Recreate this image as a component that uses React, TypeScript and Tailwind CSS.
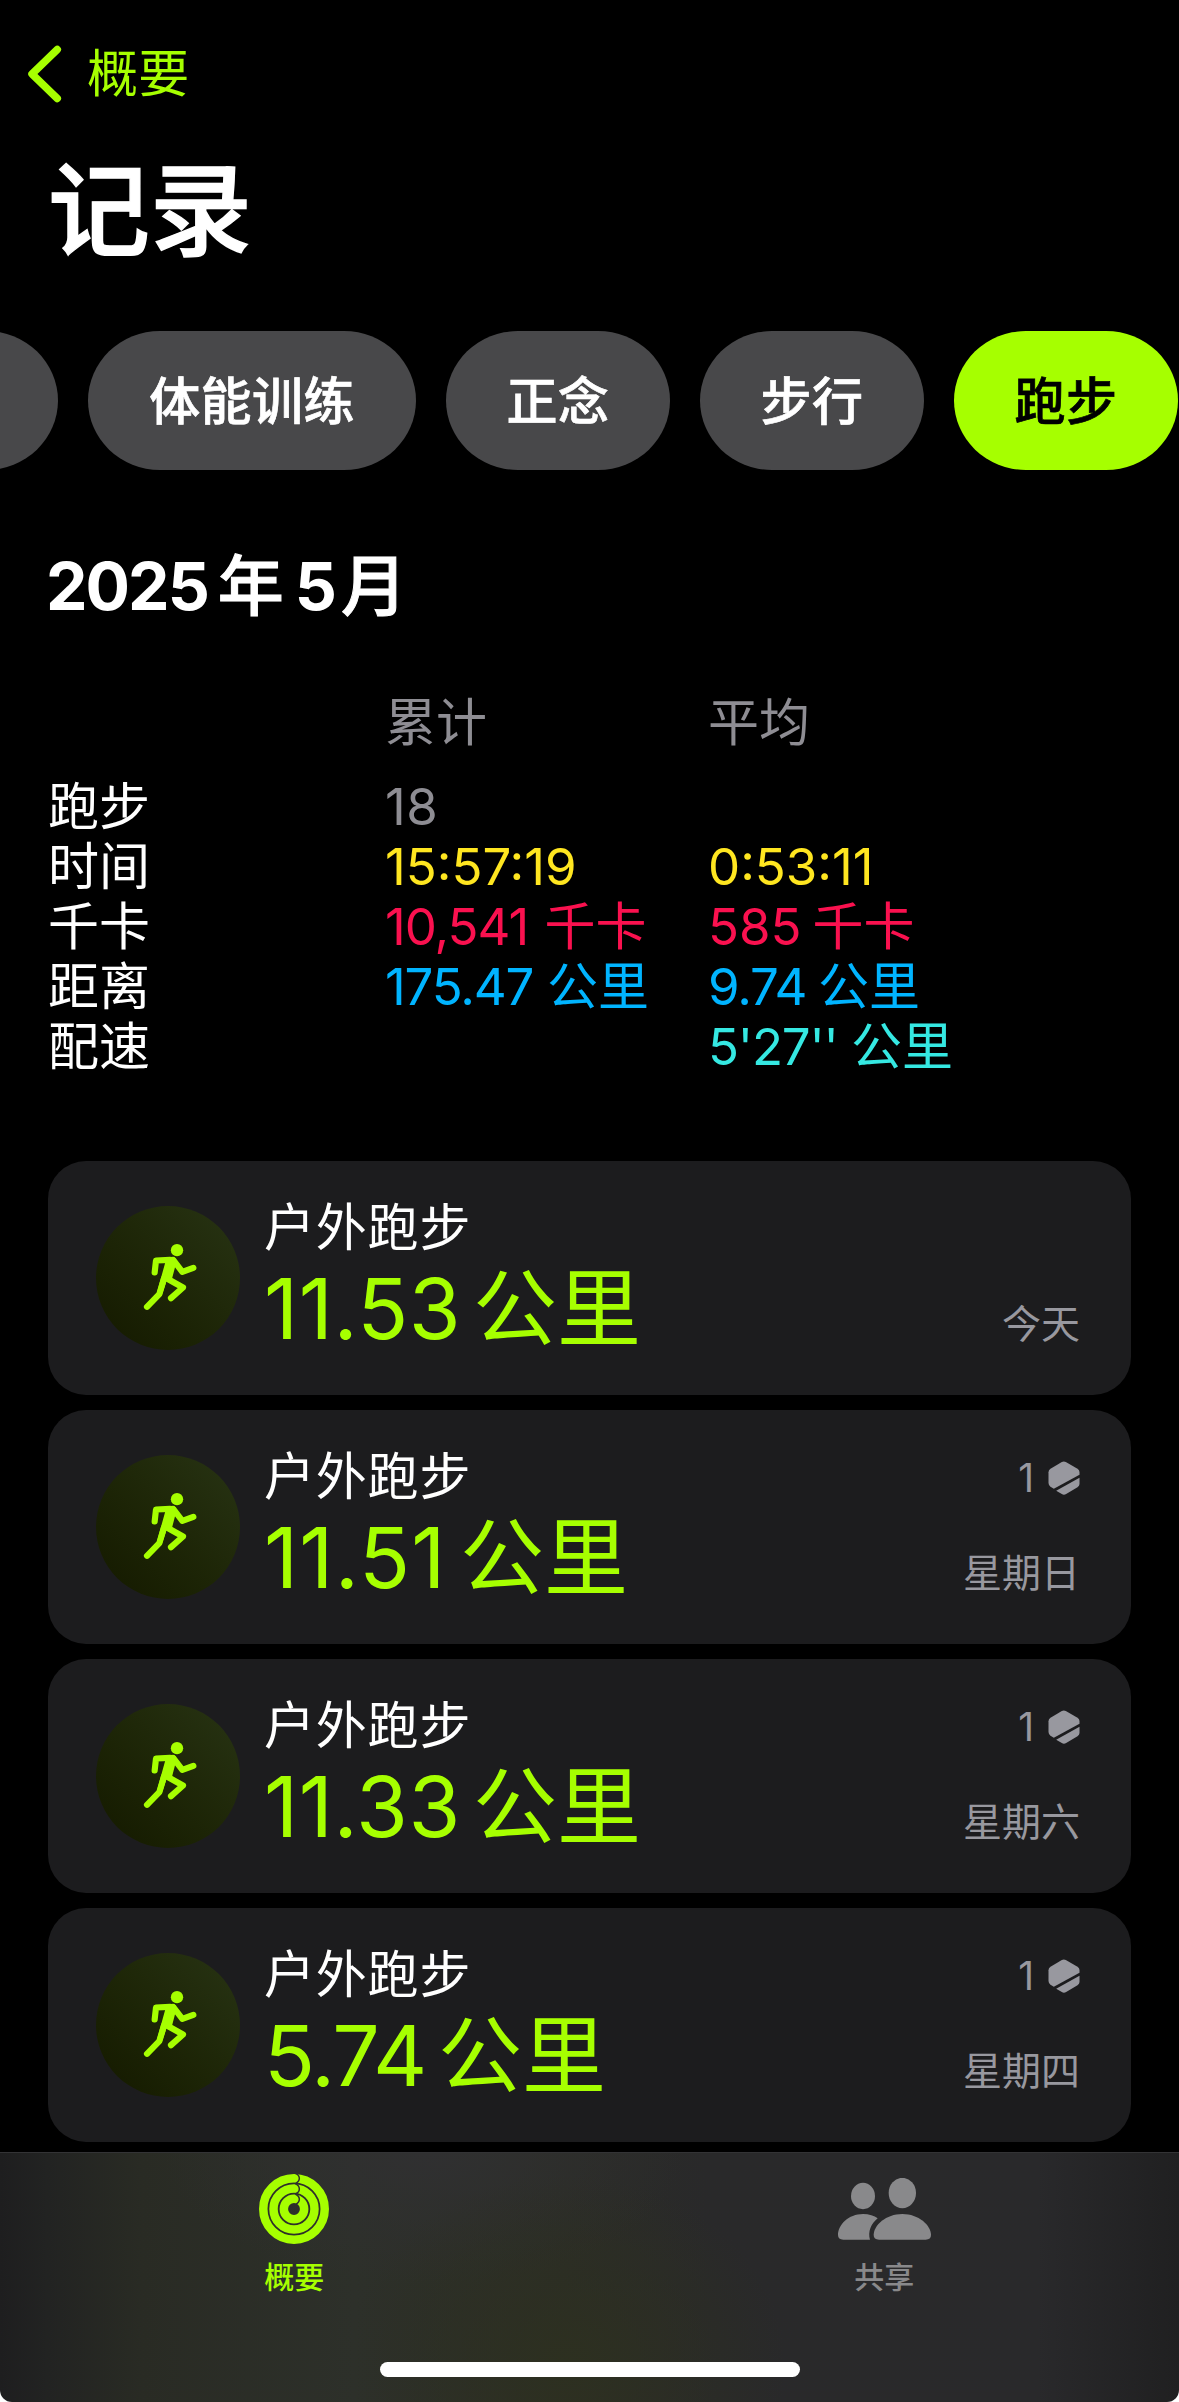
const chips = [
  { label: "体能训练", width: "w-[328px]" },
  { label: "正念", width: "w-[224px]" },
  { label: "步行", width: "w-[224px]" },
];

type Value = { number: string; unit?: string; size?: string };

const stats: { label: string; color: string; total?: Value; average?: Value }[] = [
  { label: "跑步", color: "text-[#8e8d93]", total: { number: "18", size: "tracking-[0.5px]" } },
  { label: "时间", color: "text-[#ffe620]", total: { number: "15:57:19" }, average: { number: "0:53:11" } },
  {
    label: "千卡",
    color: "text-[#fa114f]",
    total: { number: "10,541", unit: "千卡", size: "w-[159.5px] tracking-[-1px]" },
    average: { number: "585", unit: "千卡", size: "w-[104.5px]" },
  },
  {
    label: "距离",
    color: "text-[#00b4ff]",
    total: { number: "175.47", unit: "公里", size: "w-[162px] tracking-[-1.2px]" },
    average: { number: "9.74", unit: "公里", size: "w-[110px] tracking-[-1.2px]" },
  },
  {
    label: "配速",
    color: "text-[#35e8e2]",
    average: { number: "5'27''", unit: "公里", size: "w-[143px] tracking-[-1.2px]" },
  },
];

const workouts = [
  { distance: "11.53", size: "w-[209px] tracking-[0.6px]", day: "今天", awards: 0 },
  { distance: "11.51", size: "w-[196px] tracking-[1.2px]", day: "星期日", awards: 1 },
  { distance: "11.33", size: "w-[209px] tracking-[0.6px]", day: "星期六", awards: 1 },
  { distance: "5.74", size: "w-[174px] tracking-[-1.8px]", day: "星期四", awards: 1 },
];

function Stat({ value, color }: { value?: Value; color: string }) {
  return (
    <span className={`flex ${color}`}>
      {value && <span className={value.size}>{value.number}</span>}
      {value?.unit && <span>{value.unit}</span>}
    </span>
  );
}

function RunnerBadge() {
  return (
    <div className="size-36 shrink-0 rounded-full bg-linear-to-tr from-[#141900] to-[#283414]">
      <svg
        viewBox="18 17.5 432 432"
        className="size-full"
        fill="none"
        stroke="#a6ff00"
        strokeWidth="18.5"
        strokeLinecap="round"
        strokeLinejoin="round"
      >
        <circle cx="261" cy="150" r="18.5" fill="#a6ff00" stroke="none" />
        <path d="M194 217L198 181L240 179" />
        <path d="M250 180L277 215L310 203" />
        <path d="M228 172L250 170Q262 174 258 190L246 236L229 245L215 287L200 280L226 186Z" fill="#a6ff00" stroke="none" />
        <path d="M222 235L208 282L171 320" />
        <path d="M236 238L279 262L243 294" />
      </svg>
    </div>
  );
}

function AwardIcon() {
  return (
    <svg viewBox="443 184 95 102" className="h-[34px] w-[32px]" fill="#98989f">
      <path d="M484 187Q490 184 496 187L531 207Q537 211 537 217V225L460 267L450 261Q444 257 444 250V218Q444 211 450 207Z" />
      <path d="M537 234V253Q537 259 531 263L497 283Q490 287 484 283L467 273Z" />
    </svg>
  );
}

function RingsIcon() {
  return (
    <svg viewBox="177 132 210 210" className="size-[70px]" fill="none">
      <g stroke="#a6ff00" strokeWidth="25.5">
        <circle cx="282" cy="237" r="92.2" />
        <circle cx="282" cy="237" r="61.5" />
        <circle cx="282" cy="237" r="30.5" />
      </g>
      <g stroke="#2f312e" strokeWidth="4.5">
        <path d="M286 130Q298 135 298 145Q298 155 287 160" />
        <path d="M286 161Q298 167 298 177Q298 187 287 191" />
        <path d="M286 192Q298 198 298 208Q298 218 287 223" />
      </g>
    </svg>
  );
}

function PeopleIcon() {
  return (
    <svg viewBox="174 144 279 186" className="h-[62px] w-[93px]" fill="#89898b">
      <ellipse cx="249" cy="198" rx="36" ry="39.5" />
      <ellipse cx="367" cy="189" rx="41" ry="45.5" />
      <path d="M281 315C281 286 318 252 367 252S453 286 453 315Q453 329 437 329H297Q281 329 281 315Z" />
      <path d="M174 315C174 285 205 252 249 252C267 252 283 257 293 265C273 281 263 306 270 329H190Q174 329 174 315Z" />
    </svg>
  );
}

export default function App() {
  return (
    <div className="flex h-[2402px] w-[1179px] flex-col overflow-hidden bg-white font-['Inter','Noto_Sans_CJK_SC',sans-serif] text-white" lang="zh-CN">
      <div className="flex h-[2152px] shrink-0 flex-col overflow-hidden bg-black">
        <header className="flex h-[147px] shrink-0 items-center pl-[28px] text-[51px] tracking-[0.3px] text-[#a6ff00]">
          <svg viewBox="0 0 34 58" className="h-[58px] w-[34px]" fill="none" stroke="currentColor" strokeWidth="7.5" strokeLinecap="round" strokeLinejoin="round">
            <path d="M29.3 4.5L4 29L29.3 53.5" />
          </svg>
          <span className="ml-[25px] leading-[60px]">概要</span>
        </header>

        <h1 className="mt-[4px] mb-px shrink-0 pl-[48px] text-[102px] leading-[120px] font-medium [-webkit-text-stroke:1.4px_currentColor]">记录</h1>

        <nav className="mt-[59px] flex h-[139px] shrink-0 gap-[30px] text-[51px] font-medium tracking-[0.4px] [-webkit-text-stroke:0.7px_currentColor]">
          <div className="-ml-[166px] w-[224px] shrink-0 rounded-[72px/69.5px] bg-[#48484a]" />
          {chips.map((c) => (
            <button key={c.label} className={`${c.width} shrink-0 rounded-[72px/69.5px] bg-[#48484a] pt-[2px] leading-none`}>
              {c.label}
            </button>
          ))}
          <button className="w-[224px] shrink-0 rounded-[72px/69.5px] bg-[#a6ff00] pt-[2px] leading-none text-black">跑步</button>
        </nav>

        <h2 className="mt-[76px] flex shrink-0 items-center pl-[46px] text-[66px] leading-[80px] font-medium">
          <span className="font-bold tracking-[-2px]">2025</span>
          <span className="ml-[10px] [-webkit-text-stroke:1px_currentColor]">年</span>
          <span className="ml-[11px] font-bold">5</span>
          <span className="ml-[4px] [-webkit-text-stroke:1px_currentColor]">月</span>
        </h2>

        <section className="mt-[67px] grid shrink-0 grid-cols-[337px_323px_1fr] pl-[48px] text-[51px] leading-[60px] whitespace-nowrap">
          <span />
          <span className="mb-[24px] text-[#8e8d93]">累计</span>
          <span className="mb-[24px] text-[#8e8d93]">平均</span>
          {stats.map((s) => (
            <div key={s.label} className="contents">
              <span>{s.label}</span>
              <Stat value={s.total} color={s.color} />
              <Stat value={s.average} color={s.color} />
            </div>
          ))}
        </section>

        <main className="mt-[84px] flex shrink-0 flex-col gap-[15px] px-[48px]">
          {workouts.map((w) => (
            <article key={w.distance} className="flex h-[234px] items-center rounded-[38px] bg-[#1c1c1e] pr-[51px] pl-[48px]">
              <RunnerBadge />
              <div className="ml-[24px] flex h-full flex-col pt-[37px]">
                <div className="text-[51px] leading-[60px] tracking-[0.8px]">户外跑步</div>
                <div className="flex text-[84px] leading-[102px] text-[#a6ff00]">
                  <span className={w.size}>{w.distance}</span>
                  <span>公里</span>
                </div>
              </div>
              <div className="ml-auto flex h-full flex-col items-end pt-[43px] text-[39px] leading-[50px] text-[#98989f]">
                <div className="flex h-[50px] items-center gap-[14px]">
                  {w.awards > 0 && (
                    <>
                      <span>{w.awards}</span>
                      <AwardIcon />
                    </>
                  )}
                </div>
                <div className="mt-[45px]">{w.day}</div>
              </div>
            </article>
          ))}
        </main>
      </div>

      <footer className="flex h-[250px] shrink-0 flex-col items-center rounded-b-[12px] border-t border-[#333335] bg-[radial-gradient(ellipse_220px_190px_at_48%_85%,#2d3020_0%,transparent_100%),radial-gradient(ellipse_260px_130px_at_36%_0%,#303031_0%,transparent_100%),linear-gradient(90deg,#1e1e1f_0%,#222322_4%,#292b24_12%,#2d302a_30%,#2b2c27_48%,#29292a_60%,#29292b_88%,#202021_100%)]">
        <div className="grid w-full grid-cols-2 text-[30px] leading-[40px] font-medium">
          <div className="flex flex-col items-center pt-[21px] pr-[1px] text-[#a6ff00]">
            <RingsIcon />
            <span className="mt-[13px]">概要</span>
          </div>
          <div className="flex flex-col items-center pt-[25px] text-[#89898b]">
            <PeopleIcon />
            <span className="mt-[17px]">共享</span>
          </div>
        </div>
        <div className="mt-[65px] h-[15px] w-[420px] rounded-full bg-white" />
      </footer>
    </div>
  );
}
